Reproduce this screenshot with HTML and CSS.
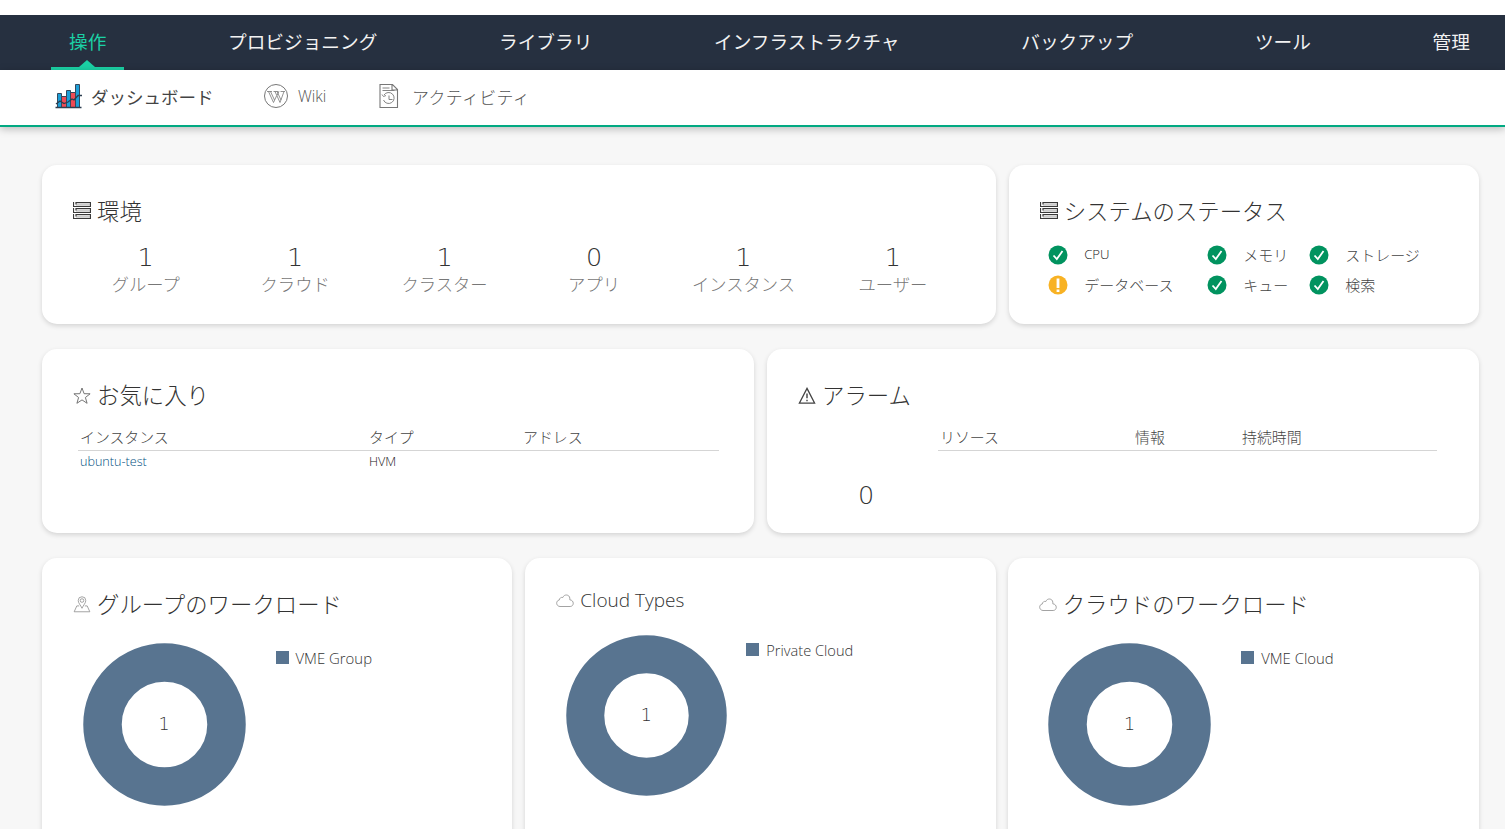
FILE: index.html
```
<!DOCTYPE html>
<html lang="ja">
<head>
  <meta charset="UTF-8" />
  <meta name="viewport" content="width=device-width, initial-scale=1.0"/>
  <title>ダッシュボード</title>
  <link rel="stylesheet" href="styles.css">
</head>
<body>
  <!-- Iconos compartidos -->
  <svg class="sprite" xmlns="http://www.w3.org/2000/svg">
    <symbol id="i-server" viewBox="0 0 18 17">
      <path d="M3 2.500h14M3 8.500h14M3 14.500h14" stroke="#ccc" stroke-width="2.500"/>
      <path d="M.5 0v4.500h17V.5H3v2M.5 6v4.500h17v-4H3v2M.5 12v4.500h17v-4H3v2" fill="none" stroke="#3a3a3a" stroke-width="1.200"/>
    </symbol>
    <symbol id="i-star" viewBox="0 0 18 17">
      <path d="M9 1l2.100 5.700 6 .1-4.700 3.700 1.700 5.800L9 12.900l-5.100 3.400 1.700-5.800L.9 6.800l6-.1z" fill="none" stroke="#666" stroke-width=".9"/>
    </symbol>
    <symbol id="i-alert" viewBox="0 0 18 18">
      <path d="M9 1.500L17 17H1z" fill="none" stroke="#444" stroke-width="1.400"/>
      <path d="M9 7v5M9 13.500v1.700" stroke="#444" stroke-width="1.500"/>
    </symbol>
    <symbol id="i-pin" viewBox="0 0 18 18">
      <g fill="none" stroke="#888" stroke-width=".8">
        <path d="M9 13C7.500 9.500 5 7.500 5 4.800a4 4 0 0 1 8 0C13 7.500 10.500 9.500 9 13z"/>
        <circle cx="9" cy="4.800" r="1.900"/>
        <path d="M6 10.500H3.500L.7 16.700h16.600l-2.800-6.200H12"/>
      </g>
    </symbol>
    <symbol id="i-cloud" viewBox="0 0 18 14">
      <path d="M4 13C-.4 12.600-.2 7 3.200 6.600 3.500 4.500 5.200 3.500 6.800 4c1.300-3.600 6.600-3.200 7 .6 0 .7.100 1.200 0 1.700 4.500.4 4.600 6.400.4 6.700z" fill="none" stroke="#999" stroke-width=".9"/>
    </symbol>
    <symbol id="i-ok" viewBox="0 0 20 20">
      <circle cx="10" cy="10" r="9.500" fill="#01935f"/>
      <path d="M5.500 10.500l3.300 3.600 5.700-8" fill="none" stroke="#fff" stroke-width="1.800"/>
    </symbol>
    <symbol id="i-warn" viewBox="0 0 20 20">
      <circle cx="10" cy="10" r="9.500" fill="#f8b224"/>
      <path d="M10 3.500v9.500M10 14.500v2.500" stroke="#fff" stroke-width="2.800"/>
    </symbol>
    <symbol id="i-donut" viewBox="0 0 163 163">
      <circle cx="81.500" cy="81.500" r="62" fill="none" stroke="#587490" stroke-width="38.500"/>
    </symbol>
  </svg>

  <nav class="main-nav">
    <a class="active">操作</a>
    <a>プロビジョニング</a>
    <a>ライブラリ</a>
    <a>インフラストラクチャ</a>
    <a>バックアップ</a>
    <a>ツール</a>
    <a>管理</a>
  </nav>

  <div class="sub-nav">
    <a class="sub-item current">
      <svg width="28" height="26" viewBox="0 0 28 26">
        <g stroke="#34495e" stroke-width="1">
          <path d="M2.500 10.500h4v14h-4zM11.500 7.500h4v17h-4zM20.500 1.500h4v23h-4z" fill="#1c9fd8"/>
          <path d="M6.500 13.500h5v11h-5zM15.500 9.500h5v15h-5z" fill="#ef4b55"/>
        </g>
        <path d="M.5 24.500h26M1 21l4-3 4 2.500 4-1.500 4-3 2 1 4-4.500h4" fill="none" stroke="#2c3e50" stroke-width="1.300"/>
      </svg>
      <span>ダッシュボード</span>
    </a>
    <a class="sub-item wiki">
      <svg width="26" height="26" viewBox="0 0 26 26" fill="none" stroke="#777">
        <circle cx="13" cy="13" r="11.500"/>
        <path d="M4 8.500h5M10.500 8.500h5M17.500 8.500h4.500M5.500 8.500l5 11 3-6.500M7.500 8.500l4 8.500M12 8.500l5 11 4-11M14 8.500l4 8.500M16 8.500l-2 4" stroke-width=".8"/>
      </svg>
      <span>Wiki</span>
    </a>
    <a class="sub-item activity">
      <svg width="20" height="26" viewBox="0 0 20 26" fill="none" stroke="#777">
        <path d="M1 1.500h12.500l5 5v18H1zM13 1.500v5.500h5.500" stroke-width="1.100"/>
        <path d="M3.500 5h7M3.500 7.500h12M5 12a5.500 5.500 0 1 1-.5 5M3 11.500l1.500 2 2.500-1M10 12.500v4h3.500" stroke-width=".9"/>
      </svg>
      <span>アクティビティ</span>
    </a>
  </div>

  <main class="dashboard">
    <section class="card environment">
      <h2><svg class="icon"><use href="#i-server"/></svg>環境</h2>
      <div class="stats">
        <div class="stat"><b>1</b><span>グループ</span></div>
        <div class="stat"><b>1</b><span>クラウド</span></div>
        <div class="stat"><b>1</b><span>クラスター</span></div>
        <div class="stat"><b>0</b><span>アプリ</span></div>
        <div class="stat"><b>1</b><span>インスタンス</span></div>
        <div class="stat"><b>1</b><span>ユーザー</span></div>
      </div>
    </section>

    <section class="card status">
      <h2><svg class="icon"><use href="#i-server"/></svg>システムのステータス</h2>
      <div class="checks">
        <div class="check"><svg><use href="#i-ok"/></svg><span class="latin">CPU</span></div>
        <div class="check"><svg><use href="#i-ok"/></svg><span>メモリ</span></div>
        <div class="check"><svg><use href="#i-ok"/></svg><span>ストレージ</span></div>
        <div class="check"><svg><use href="#i-warn"/></svg><span>データベース</span></div>
        <div class="check"><svg><use href="#i-ok"/></svg><span>キュー</span></div>
        <div class="check"><svg><use href="#i-ok"/></svg><span>検索</span></div>
      </div>
    </section>

    <section class="card favorites">
      <h2><svg class="icon"><use href="#i-star"/></svg>お気に入り</h2>
      <table class="list">
        <tr><th class="col-instance">インスタンス</th><th class="col-type">タイプ</th><th>アドレス</th></tr>
        <tr><td><a class="link">ubuntu-test</a></td><td>HVM</td><td></td></tr>
      </table>
    </section>

    <section class="card alarms">
      <h2><svg class="icon"><use href="#i-alert"/></svg>アラーム</h2>
      <div class="alarm-body">
        <div class="alarm-count">0</div>
        <table class="list">
          <tr><th class="col-resource">リソース</th><th class="col-info">情報</th><th>持続時間</th></tr>
        </table>
      </div>
    </section>

    <section class="card chart">
      <h2><svg class="icon"><use href="#i-pin"/></svg>グループのワークロード</h2>
      <div class="chart-body">
        <div class="donut"><svg><use href="#i-donut"/></svg><span>1</span></div>
        <div class="legend"><i></i><span>VME Group</span></div>
      </div>
    </section>

    <section class="card chart types">
      <h2><svg class="icon"><use href="#i-cloud"/></svg>Cloud Types</h2>
      <div class="chart-body">
        <div class="donut"><svg viewBox="0 0 163 163"><use href="#i-donut"/></svg><span>1</span></div>
        <div class="legend"><i></i><span>Private Cloud</span></div>
      </div>
    </section>

    <section class="card chart">
      <h2><svg class="icon"><use href="#i-cloud"/></svg>クラウドのワークロード</h2>
      <div class="chart-body">
        <div class="donut"><svg><use href="#i-donut"/></svg><span>1</span></div>
        <div class="legend"><i></i><span>VME Cloud</span></div>
      </div>
    </section>
  </main>
</body>
</html>
```
FILE: styles.css
```
* { margin: 0; padding: 0; box-sizing: border-box; }

body, html {
  height: 100%;
  overflow: hidden;
}

body {
  font-family: "Noto Sans CJK JP", sans-serif;
  font-weight: 300;
  background: #f7f7f7;
  color: #333;
  border-top: 15px solid #fff;
}

.sprite {
  display: none;
}

/* Menú principal */
.main-nav {
  height: 55px;
  padding: 0 17px 0 51px;
  background: #263040;
  display: flex;
  justify-content: space-between;
}

.main-nav a {
  position: relative;
  padding: 0 18px;
  line-height: 52px;
  font-size: 18.67px;
  font-weight: 400;
  color: #f2f2f2;
}

.main-nav .active {
  color: #1bd1a5;
  border-bottom: 3px solid #1bd1a5;
}

.main-nav .active::after {
  content: "";
  position: absolute;
  left: 50%;
  bottom: 0;
  margin-left: -9px;
  border: 8px solid transparent;
  border-top: 0;
  border-bottom: 7px solid #1bd1a5;
}

.sub-nav {
  position: relative;
  height: 57px;
  padding-left: 55px;
  background: #fff;
  border-bottom: 2px solid #01a982;
  box-shadow: 0 2px 8px rgba(0, 0, 0, 0.25);
  display: flex;
}

.sub-item {
  display: flex;
  align-items: center;
  height: 52px;
  font-size: 16.9px;
  color: #555;
}

.sub-item span {
  line-height: 24px;
  padding-top: 1px;
}

.current {
  width: 208px;
  gap: 8px;
  font-size: 17.5px;
  font-weight: 400;
  color: #444;
}

.wiki {
  width: 116px;
  gap: 9px;
  font-family: "Open Sans", sans-serif;
  font-size: 15.5px;
}

.wiki span { padding: 0; }

.activity {
  gap: 13px;
  letter-spacing: 0.4px;
}

/* Tarjetas */
.dashboard {
  display: grid;
  grid-template-columns: repeat(12, 1fr);
  grid-template-rows: 159px 184px 300px;
  gap: 25px 13px;
  padding: 38px 26px 0 42px;
}

.card {
  grid-column: span 4;
  background: #fff;
  border-radius: 15px;
  box-shadow: 0 2px 5px rgba(0, 0, 0, 0.14);
  padding-top: 30px;
}

.environment { grid-column: span 8; }

.favorites, .alarms { grid-column: span 6; }

.chart:last-child { margin-left: -1px; }

h2 {
  display: flex;
  align-items: center;
  gap: 6px;
  height: 30px;
  padding-left: 31px;
  font-size: 22.4px;
  line-height: 30px;
  font-weight: 300;
}

.icon {
  width: 18px;
  height: 17px;
  margin-top: 2px;
}

.environment .icon, .status .icon {
  margin: 0;
}

.stats {
  display: flex;
  padding: 17px 28px 0 29px;
}

.stat {
  flex: 1;
  text-align: center;
}

.stat b, .alarm-count, .donut span {
  font-family: "DejaVu Sans", sans-serif;
  font-weight: 200;
}

.stat b {
  display: block;
  font-size: 25.5px;
  line-height: 30px;
}

.stat span {
  display: block;
  font-size: 17.3px;
  line-height: 24px;
  color: #777;
}

.checks {
  display: grid;
  grid-template-columns: 159px 102px auto;
  grid-auto-rows: 30px;
  padding: 15px 0 0 39.5px;
}

.check {
  display: flex;
  align-items: center;
  gap: 16px;
  font-size: 15px;
  color: #444;
}

.check svg {
  width: 20px;
  height: 20px;
  margin-bottom: 1px;
}

.check span {
  line-height: 20px;
}

.check .latin {
  font-family: "Open Sans", sans-serif;
  font-size: 13.2px;
  padding-bottom: 2px;
  color: #222;
}

.list {
  border-collapse: collapse;
  table-layout: fixed;
  text-align: left;
  color: #444;
}

.list th {
  height: 26px;
  padding: 0 2px;
  font-size: 14.9px;
  line-height: 24px;
  font-weight: 300;
  border-bottom: 1px solid #d5d5d5;
}

.list td {
  padding: 0 2px;
  font-family: "Open Sans", sans-serif;
  font-size: 12.6px;
  line-height: 21px;
  color: #222;
}

.link { color: #004f80; }

.favorites .list {
  width: 641px;
  margin: 15px 0 0 36px;
}

.col-instance { width: 289px; }
.col-type { width: 154px; }

.alarm-body {
  display: flex;
  padding: 15px 42px 0 27px;
}

.alarm-body .list {
  flex: none;
  width: 499px;
  height: 26px;
}

.alarm-count {
  width: 144px;
  padding-top: 55px;
  font-size: 25.5px;
  line-height: 32px;
  text-align: center;
}

.col-resource { width: 195px; }
.col-info { width: 107px; }

/* Gráficos */
.chart-body {
  display: flex;
  align-items: flex-start;
  gap: 30px;
  padding: 25px 0 0 40.5px;
}

.donut {
  display: grid;
  place-items: center;
  width: 163px;
  height: 163px;
}

.donut svg, .donut span {
  grid-area: 1 / 1;
}

.donut svg {
  width: 100%;
  height: 100%;
}

.donut span {
  font-size: 17.5px;
  line-height: 20px;
  padding-bottom: 1px;
}

.legend {
  display: flex;
  align-items: center;
  gap: 7px;
  height: 20px;
  margin-top: 5px;
  font-family: "Open Sans", sans-serif;
  font-size: 14.9px;
}

.legend i {
  width: 13px;
  height: 13px;
  margin-bottom: 1px;
  background: #587490;
}

.types h2 {
  height: 22px;
  padding-top: 1px;
  font-family: "Open Sans", sans-serif;
  font-size: 19px;
}

.types .donut {
  width: 161px;
  height: 161px;
}

.types .chart-body { gap: 19.5px; }

.types .legend { font-size: 14.6px; }
```
